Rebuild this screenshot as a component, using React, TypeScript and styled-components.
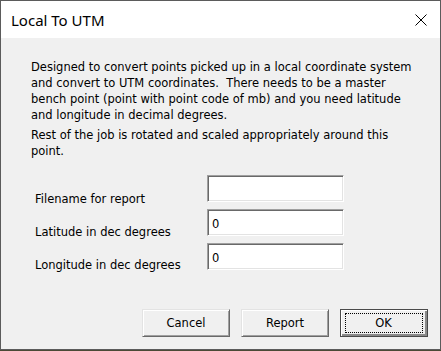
import styled, { createGlobalStyle } from "styled-components";

const GlobalStyle = createGlobalStyle`
  html, body {
    margin: 0;
    padding: 0;
    background: #4b4a36;
  }
  body {
    width: 441px;
    height: 351px;
    overflow: hidden;
  }
`;

function CloseIcon() {
    return (
        <svg width="12" height="12" viewBox="0 0 12 12">
            <path d="M0.5 0.5 L11.5 11.5 M11.5 0.5 L0.5 11.5" stroke="#000" strokeWidth="1" fill="none" />
        </svg>
    );
}

export default function App() {
    return (
        <>
            <GlobalStyle />
            <Window>
                <TitleBar>
                    <Title>Local To UTM</Title>
                    <CloseButton><CloseIcon /></CloseButton>
                </TitleBar>
                <Body>
                    <Description>
                        Designed to convert points picked up in a local coordinate system
                        and convert to UTM coordinates.&nbsp; There needs to be a master
                        bench point (point with point code of mb) and you need latitude
                        and longitude in decimal degrees.
                    </Description>
                    <Description $gap>
                        Rest of the job is rotated and scaled appropriately around this
                        point.
                    </Description>
                    <Form>
                        <FieldRow>
                            <FieldLabel>Filename for report</FieldLabel>
                            <TextInput defaultValue="" />
                        </FieldRow>
                        <FieldRow>
                            <FieldLabel $rise={1}>Latitude in dec degrees</FieldLabel>
                            <TextInput defaultValue="0" />
                        </FieldRow>
                        <FieldRow>
                            <FieldLabel $rise={2}>Longitude in dec degrees</FieldLabel>
                            <TextInput defaultValue="0" />
                        </FieldRow>
                    </Form>
                    <ButtonsRow>
                        <DialogButton>Cancel</DialogButton>
                        <DialogButton>Report</DialogButton>
                        <DialogButton $default>
                            <FocusRect>OK</FocusRect>
                        </DialogButton>
                    </ButtonsRow>
                </Body>
            </Window>
        </>
    );
}

const Window = styled.div`
  width: 441px;
  height: 350px;
  box-sizing: border-box;
  border: 1px solid #5b5b5b;
  display: flex;
  flex-direction: column;
  background: #f0f0f0;
`;
const TitleBar = styled.div`
  height: 37px;
  flex: 0 0 37px;
  background: #ffffff;
  display: flex;
  align-items: center;
  justify-content: space-between;
  padding: 0 13px 0 10px;
`;
const Title = styled.div`
  font-family: "Noto Sans", "Open Sans", sans-serif;
  font-size: 15px;
  color: #000;
  margin-top: 1px;
`;
const CloseButton = styled.div`
  display: flex;
  align-items: center;
  margin-top: 1px;
`;
const Body = styled.div`
  flex: 1;
  display: flex;
  flex-direction: column;
  padding: 21px 12px 12px 30px;
  font-family: "DejaVu Sans", sans-serif;
  font-size: 11.5px;
  color: #000;
`;
const Description = styled.p<{ $gap?: boolean }>`
  margin: ${p => (p.$gap ? "4px" : "0")} 0 0 0;
  line-height: 16px;
  width: 390px;
`;
const Form = styled.div`
  margin: 16px 0 0 4px;
  display: flex;
  flex-direction: column;
  gap: 7px;
`;
const FieldRow = styled.div`
  display: flex;
  align-items: flex-end;
`;
const FieldLabel = styled.div<{ $rise?: number }>`
  width: 172px;
  line-height: 16px;
  margin-bottom: ${p => -5 + (p.$rise ?? 0)}px;
`;
const TextInput = styled.input`
  width: 137px;
  height: 27px;
  box-sizing: border-box;
  margin: 0;
  padding: 3px 4px 0 4px;
  align-self: flex-start;
  border: 1px solid;
  border-color: #a0a0a0 #ffffff #ffffff #a0a0a0;
  box-shadow: inset 1px 1px 0 #696969, inset -1px -1px 0 #e3e3e3;
  background: #fff;
  font-family: "DejaVu Sans", sans-serif;
  font-size: 11.5px;
  line-height: 16px;
  color: #000;
  outline: none;
  vertical-align: top;
`;
const ButtonsRow = styled.div`
  margin-top: auto;
  display: flex;
  justify-content: flex-end;
  gap: 11px;
`;
const DialogButton = styled.button<{ $default?: boolean }>`
  width: 88px;
  height: 28px;
  box-sizing: border-box;
  margin: 0;
  padding: 0;
  background: #f0f0f0;
  font-family: "DejaVu Sans", sans-serif;
  font-size: 11.5px;
  color: #000;
  display: flex;
  align-items: center;
  justify-content: center;
  border: 1px solid;
  border-color: ${p => (p.$default ? "#4a4a4a" : "#e3e3e3 #696969 #696969 #e3e3e3")};
  box-shadow: ${p =>
        p.$default
            ? "inset 1px 1px 0 #ffffff, inset -2px -2px 0 #8a8a8a"
            : "inset 1px 1px 0 #ffffff, inset -1px -1px 0 #a0a0a0"};
`;
const FocusRect = styled.span`
  width: 76px;
  height: 18px;
  border: 1px dotted #000;
  display: flex;
  align-items: center;
  justify-content: center;
  margin: -1px 0 0 -1px;
`;
